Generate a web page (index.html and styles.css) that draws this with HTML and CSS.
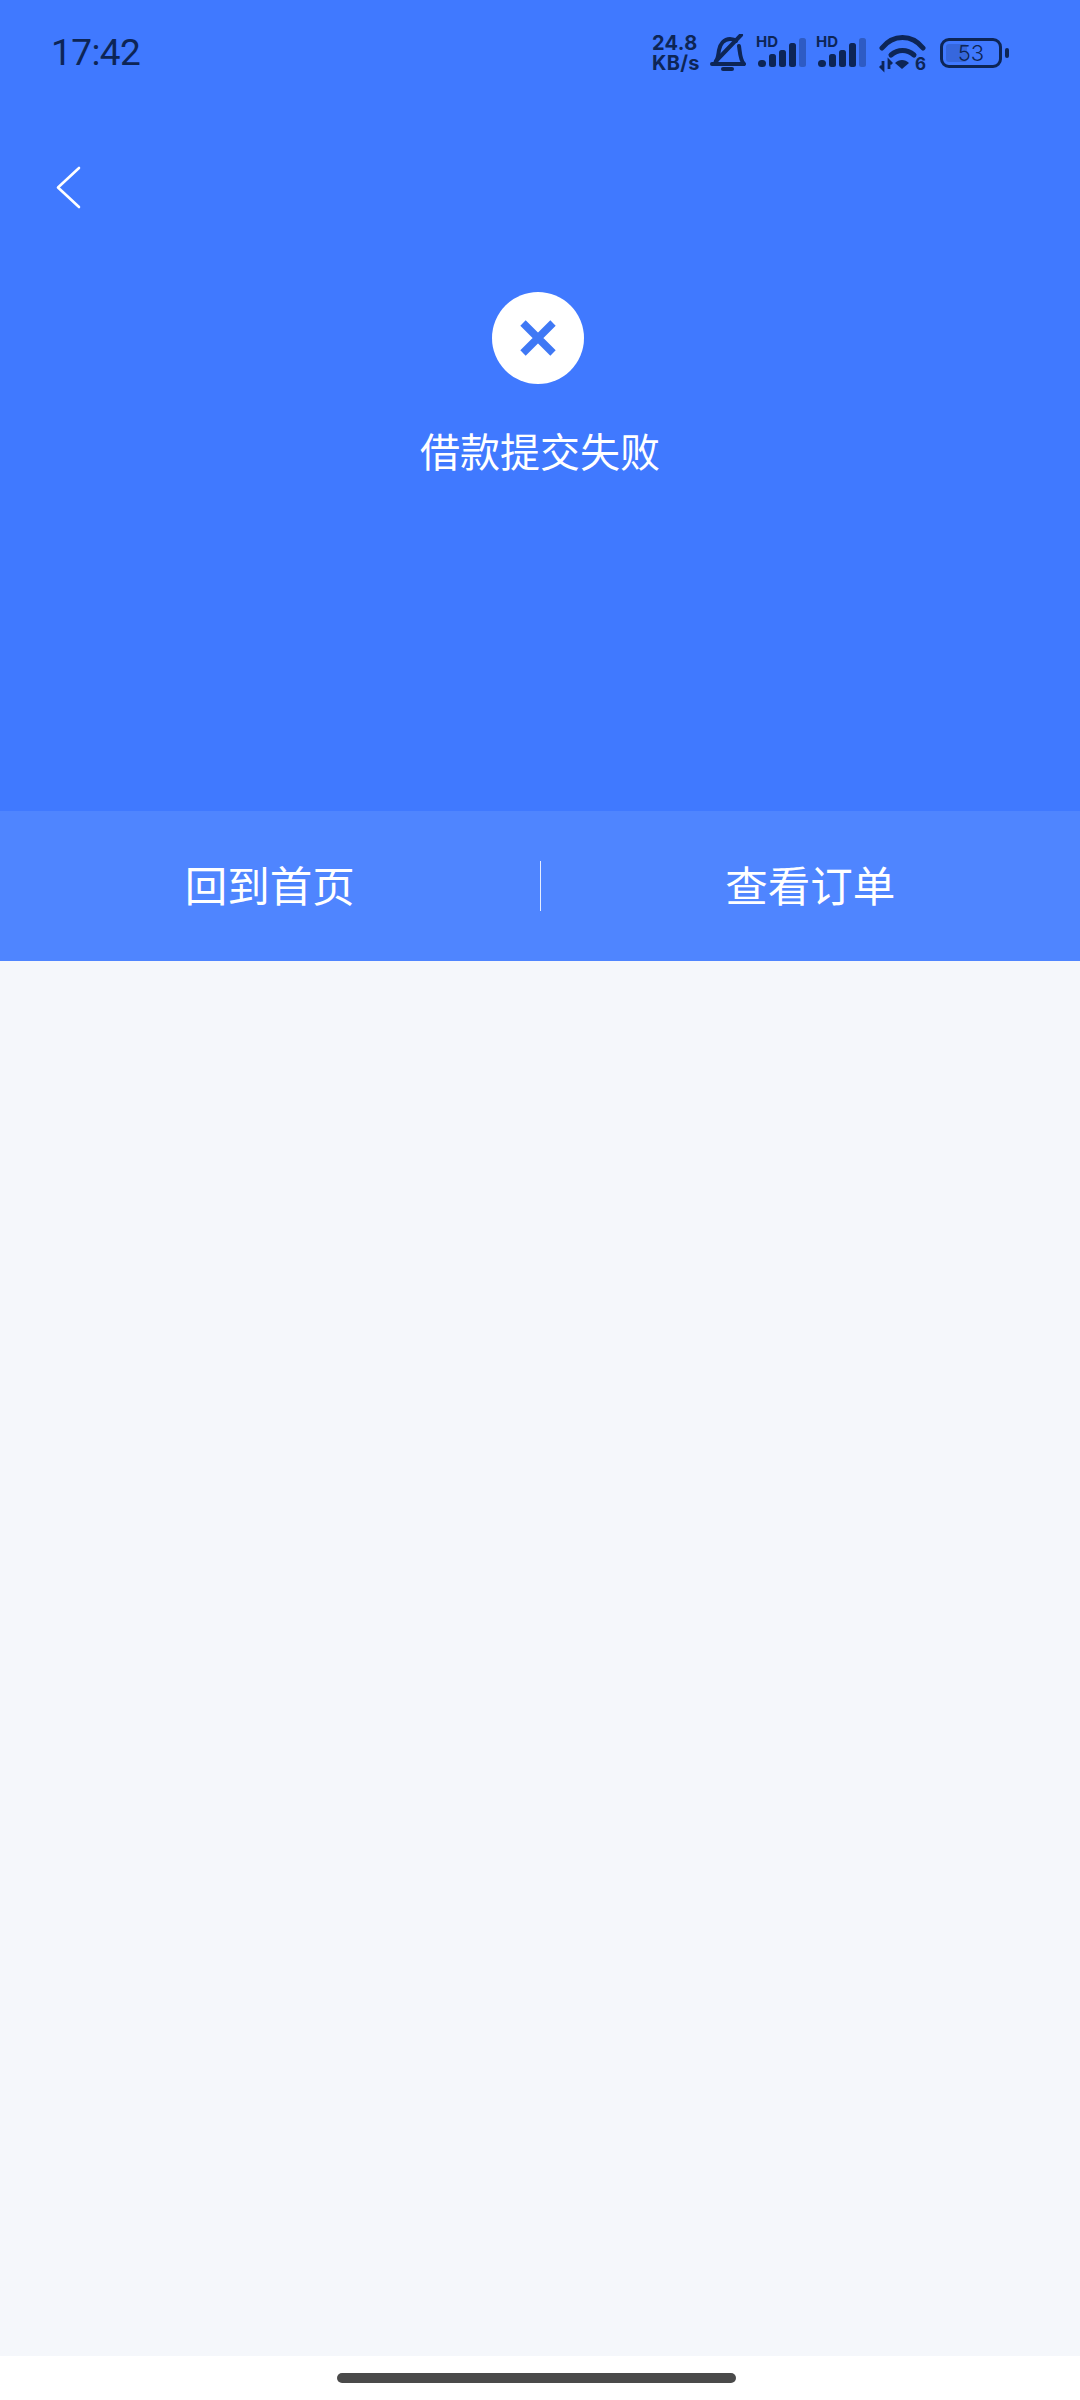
FILE: index.html
```html
<!DOCTYPE html>
<html lang="zh-CN">
<head>
<meta charset="utf-8">
<title>借款提交失败</title>
<link rel="stylesheet" href="styles.css">
</head>
<body>
<div class="page">
  <header class="hero">
    <div class="status">
      <span class="time">17:42</span>
      <div class="status-icons">
        <span class="speed"><span>24.8</span><span>KB/s</span></span>
        <svg class="ic-bell" width="36" height="38" viewBox="0 0 36 38" fill="none" stroke="#0d2556" stroke-width="4" stroke-linecap="round" stroke-linejoin="round"><path d="M4 30c4-3 4-8 5-14 1-6 5-11 11-11 3 0 5 1 6 2"/><path d="M29 12c1 6 1 14 5 18H2"/><path d="M6 27 31 1"/><path d="M13 35h9"/></svg>
        <svg class="ic-signal" width="50" height="42" viewBox="0 -7 50 42"><text x="0" y="10" class="hd">HD</text><rect x="2" y="23" width="8" height="7" rx="3.500" fill="#0d2556"/><rect x="13" y="17" width="7" height="13" rx="2.500" fill="#0d2556"/><rect x="23" y="13" width="7" height="17" rx="2.500" fill="#0d2556"/><rect x="33" y="6" width="7" height="24" rx="2.500" fill="#0d2556"/><rect x="43" y="1" width="7" height="29" rx="2.500" fill="#0d2556" opacity=".35"/></svg>
        <svg class="ic-signal" width="50" height="42" viewBox="0 -7 50 42"><text x="0" y="10" class="hd">HD</text><rect x="2" y="23" width="8" height="7" rx="3.500" fill="#0d2556"/><rect x="13" y="17" width="7" height="13" rx="2.500" fill="#0d2556"/><rect x="23" y="13" width="7" height="17" rx="2.500" fill="#0d2556"/><rect x="33" y="6" width="7" height="24" rx="2.500" fill="#0d2556"/><rect x="43" y="1" width="7" height="29" rx="2.500" fill="#0d2556" opacity=".35"/></svg>
        <svg class="ic-wifi" width="50" height="44" viewBox="0 0 50 44" fill="none"><path d="M3 14C14 0 33 0 44 14" stroke="#0d2556" stroke-width="5" stroke-linecap="round"/><path d="M12 21c7-6 16-6 23 0" stroke="#0d2556" stroke-width="5" stroke-linecap="round"/><path d="M16 29c4-4 10-4 14 0l-7 6z" fill="#0d2556"/><path d="M4 27v8l-3-3M10 35v-8l3 3" stroke="#0d2556" stroke-width="2.800"/><text x="36" y="36" class="six">6</text></svg>
        <div class="battery">
          <div class="battery-body"><span class="battery-fill"></span><span class="battery-num">53</span></div>
          <span class="battery-nub"></span>
        </div>
      </div>
    </div>
    <nav class="nav">
      <svg width="25" height="43" viewBox="0 0 25 43" fill="none" stroke="#fff" stroke-width="2.600" stroke-linecap="round" stroke-linejoin="round"><path d="M23 2 2 21.500 23 41"/></svg>
    </nav>
    <section class="result">
      <span class="result-icon">
        <svg width="38" height="38" viewBox="0 0 38 38" fill="none" stroke="#3f78f5" stroke-width="7.600"><path d="M4 4 34 34M34 4 4 34"/></svg>
      </span>
      <h1 class="result-title">借款提交失败</h1>
    </section>
  </header>
  <div class="actions">
    <a class="action">回到首页</a>
    <span class="divider"></span>
    <a class="action">查看订单</a>
  </div>
  <main class="content"></main>
  <footer class="gesture"><span class="gesture-bar"></span></footer>
</div>
</body>
</html>
```
FILE: styles.css
```css
* { box-sizing: border-box; }
html, body { margin: 0; padding: 0; }
body {
  width: 1080px;
  height: 2400px;
  background: #fff;
  font-family: "Noto Sans CJK SC", "Noto Sans", sans-serif;
}
.page { display: flex; flex-direction: column; height: 2400px; }
.hero { height: 811px; background: #4079ff; display: flex; flex-direction: column; }
.status {
  height: 104px;
  padding: 34px 71px 0 51px;
  display: flex;
  justify-content: space-between;
  align-items: flex-start;
}
.time {
  font: 400 37px/38px Roboto, sans-serif;
  letter-spacing: -.6px;
  color: #0d2556;
}
.status-icons { display: flex; align-items: center; height: 38px; }
.speed {
  display: flex;
  flex-direction: column;
  width: 48px;
  margin-right: 10px;
  font: 700 20px/20px Inter, "Liberation Sans", sans-serif;
  letter-spacing: .3px;
  color: #0d2556;
  white-space: nowrap;
}
.ic-bell { margin-right: 10px; }
.ic-signal { margin-right: 10px; margin-top: -4px; }
.ic-signal + .ic-wifi { margin-left: 3px; margin-right: 11px; margin-top: 6px; }
.hd { font: 700 15px Inter, "Liberation Sans", sans-serif; fill: #0d2556; }
.six { font: 700 17px Inter, "Liberation Sans", sans-serif; fill: #0d2556; }
.battery { display: flex; align-items: center; gap: 3px; }
.battery-body {
  position: relative;
  width: 62px;
  height: 30px;
  border: 3px solid #0d2556;
  border-radius: 9px;
  display: flex;
  align-items: center;
  justify-content: center;
}
.battery-fill {
  position: absolute;
  left: 3px;
  top: 3px;
  bottom: 3px;
  width: 21px;
  background: #0d2556;
  opacity: .2;
  border-radius: 3px;
}
.battery-num { position: relative; font: 300 22px/1 Inter, "Liberation Sans", sans-serif; color: #0d2556; }
.battery-nub { width: 4px; height: 10px; background: #0d2556; border-radius: 2px; }
.nav { height: 188px; padding: 62px 0 0 56px; }
.nav svg { display: block; }
.result { display: flex; flex-direction: column; align-items: center; }
.result-icon {
  width: 92px;
  height: 92px;
  margin-right: 4px;
  border-radius: 50%;
  background: #fff;
  display: flex;
  align-items: center;
  justify-content: center;
}
.result-icon svg { display: block; }
.result-title {
  margin: 38px 0 0;
  font-size: 40px;
  line-height: 56px;
  font-weight: 400;
  color: #fff;
}
.actions {
  height: 150px;
  background: #4f85ff;
  display: flex;
  align-items: center;
}
.action {
  flex: 1;
  padding-bottom: 5px;
  text-align: center;
  font-size: 42.5px;
  line-height: 60px;
  color: #fff;
}
.divider { width: 1px; height: 50px; background: rgba(255,255,255,.85); }
.content { flex: 1; background: #f5f7fb; }
.gesture { height: 44px; display: flex; justify-content: center; padding-top: 17px; padding-right: 8px; background: #fff; }
.gesture-bar { width: 399px; height: 10px; border-radius: 5px; background: #4a4a4a; }
```
